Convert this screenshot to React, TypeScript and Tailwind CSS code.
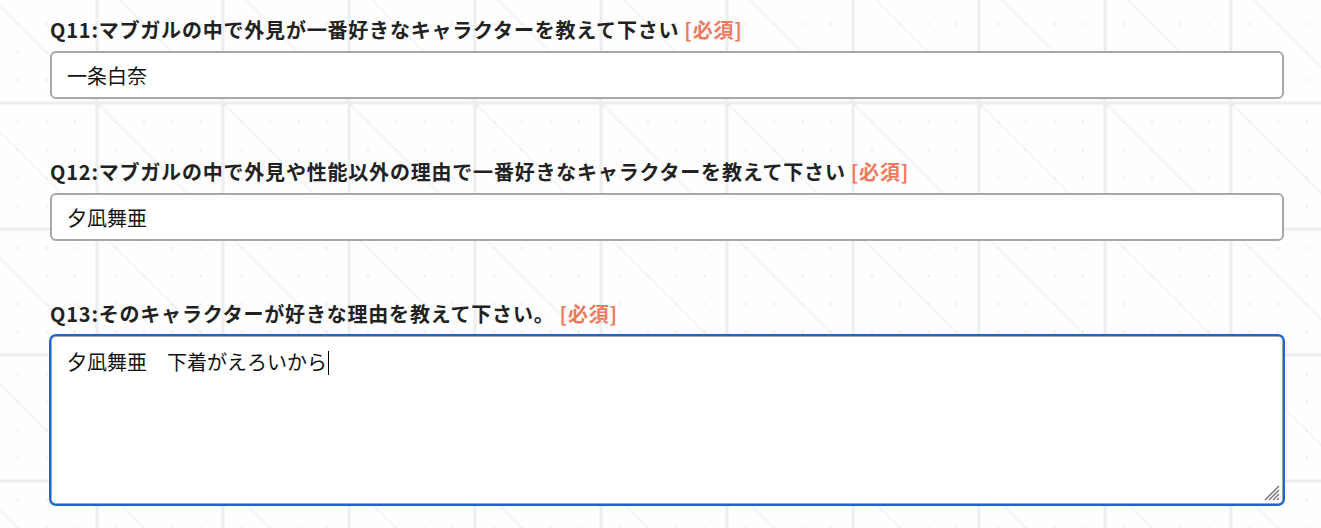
import React from 'react';

const questions = [
  {
    no: 'Q11',
    text: 'マブガルの中で外見が一番好きなキャラクターを教えて下さい',
    value: '一条白奈',
    multiline: false,
  },
  {
    no: 'Q12',
    text: 'マブガルの中で外見や性能以外の理由で一番好きなキャラクターを教えて下さい',
    value: '夕凪舞亜',
    multiline: false,
  },
  {
    no: 'Q13',
    text: 'そのキャラクターが好きな理由を教えて下さい。',
    value: '夕凪舞亜　下着がえろいから',
    multiline: true,
  },
];

// faint grid paper behind the form
const GridBackground = () => (
  <svg className="absolute inset-0 w-full h-full" aria-hidden="true">
    <defs>
      <pattern id="grid" x="95.5" y="101.5" width="126" height="126" patternUnits="userSpaceOnUse">
        <line x1="1.5" y1="1.5" x2="127.5" y2="127.5" stroke="#f1f1f3" strokeWidth="1.5" />
        <rect x="0" y="0" width="3" height="126" fill="#eceef1" />
        <rect x="0" y="0" width="126" height="3" fill="#eceef1" />
        <circle cx="1.5" cy="1.5" r="4" fill="#e9ebef" />
        {[19.5, 47.5, 76, 104].map((x) =>
          [19.5, 47.5, 75.5, 103.5].map((y) => (
            <rect key={`${x}-${y}`} x={x} y={y} width="2" height="2" fill="#e6e6e8" />
          ))
        )}
      </pattern>
    </defs>
    <rect width="100%" height="100%" fill="#fefefe" />
    <rect width="100%" height="100%" fill="url(#grid)" />
  </svg>
);

// textarea resize handle
const ResizeGrip = () => (
  <svg
    className="absolute right-[2px] bottom-[2px]"
    width="16"
    height="16"
    viewBox="0 0 16 16"
    aria-hidden="true"
  >
    <path
      d="M15 1 L1 15 M15 5 L5 15 M15 9 L9 15 M15 13 L13 15"
      stroke="#6f6f6f"
      strokeWidth="1.3"
    />
  </svg>
);

const App = () => {
  return (
    <div
      className="relative w-[1321px] h-[528px] overflow-hidden"
      style={{ fontFamily: '"Noto Sans CJK JP", "Noto Sans", sans-serif' }}
    >
      <GridBackground />

      <form className="relative pl-[50px] pr-[37px] pt-[16px] flex flex-col gap-[59px]">
        {questions.map((q) => (
          <div key={q.no} className="flex flex-col gap-[7px]">
            <label className="text-[20px] leading-[28px] font-bold text-[#222] tracking-[0.8px]">
              {q.no}:{q.text}
              <span className="ml-[5px] text-[#ee7a5e]">[必須]</span>
            </label>

            {q.multiline ? (
              <div
                role="textbox"
                aria-multiline="true"
                className="relative h-[170px] w-full rounded-[6px] border-2 border-[#a8a8a8] bg-white px-[15px] py-[11px] text-[20px] leading-[28px] text-[#111] outline-2 outline-offset-[-1px] outline-[#1866d6]"
              >
                <span>{q.value}</span>
                <span className="inline-block w-px h-[24px] bg-black align-[-5px] ml-px" />
                <ResizeGrip />
              </div>
            ) : (
              <input
                type="text"
                defaultValue={q.value}
                className="h-[48px] w-full rounded-[6px] border-2 border-[#a8a8a8] bg-white px-[15px] text-[20px] text-[#111] outline-none"
              />
            )}
          </div>
        ))}
      </form>
    </div>
  );
};

export default App;
